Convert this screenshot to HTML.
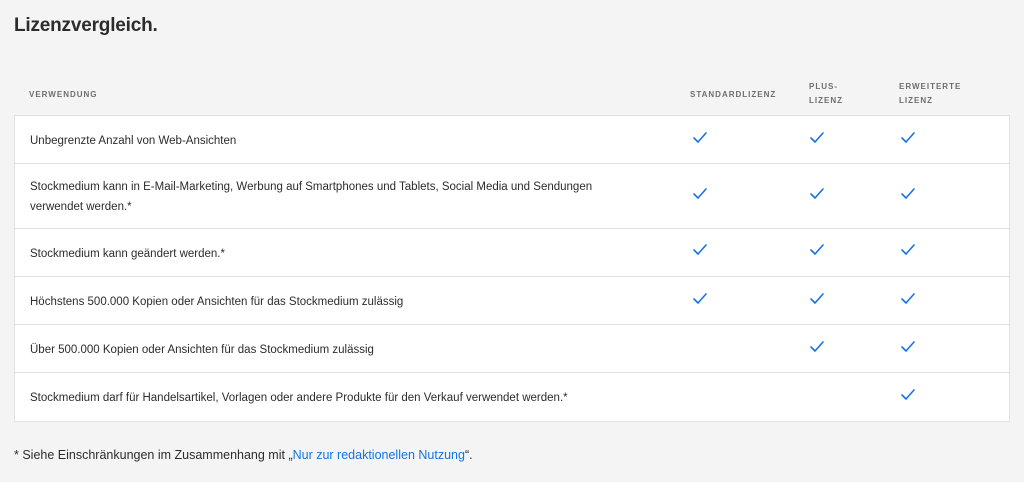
<!DOCTYPE html>
<html><head><meta charset="utf-8"><style>
body{margin:0;width:1024px;height:482px;background:#f4f4f4;font-family:"Liberation Sans",sans-serif;color:#2c2c2c;position:relative;overflow:hidden}
h1{position:absolute;left:14px;top:15px;margin:0;font-size:19px;font-weight:bold;color:#2c2c2c;letter-spacing:-0.2px}
.h{position:absolute;font-size:8px;font-weight:bold;color:#6e6e6e;letter-spacing:1px;line-height:14px}
.tbl{position:absolute;left:14px;top:115px;width:994px;height:305px;background:#fff;border:1px solid #e1e1e1}
.row{position:absolute;left:0;width:994px;border-top:1px solid #e1e1e1}
.t{position:absolute;left:15px;font-size:11.5px;line-height:20px;color:#2c2c2c}
.f{position:absolute;left:14px;top:448px;font-size:12.5px;color:#2c2c2c}
.f a{color:#1473e6;text-decoration:none}
</style></head><body>
<h1>Lizenzvergleich.</h1>
<div class="h" style="left:29px;top:88px">VERWENDUNG</div>
<div class="h" style="left:690px;top:88px">STANDARDLIZENZ</div>
<div class="h" style="left:809px;top:80px">PLUS-<br>LIZENZ</div>
<div class="h" style="left:899px;top:80px">ERWEITERTE<br>LIZENZ</div>
<div class="tbl">
<div class="row" style="top:-1px;height:48px;border-top:none"><div class="t" style="top:16px">Unbegrenzte Anzahl von Web-Ansichten</div></div>
<div class="row" style="top:47px;height:65px"><div class="t" style="top:13px">Stockmedium kann in E-Mail-Marketing, Werbung auf Smartphones und Tablets, Social Media und Sendungen<br>verwendet werden.*</div></div>
<div class="row" style="top:112px;height:48px"><div class="t" style="top:15px">Stockmedium kann geändert werden.*</div></div>
<div class="row" style="top:160px;height:48px"><div class="t" style="top:15px">Höchstens 500.000 Kopien oder Ansichten für das Stockmedium zulässig</div></div>
<div class="row" style="top:208px;height:48px"><div class="t" style="top:15px">Über 500.000 Kopien oder Ansichten für das Stockmedium zulässig</div></div>
<div class="row" style="top:256px;height:48px"><div class="t" style="top:15px">Stockmedium darf für Handelsartikel, Vorlagen oder andere Produkte für den Verkauf verwendet werden.*</div></div>
</div>
<svg width="1024" height="482" style="position:absolute;left:0;top:0" fill="none" stroke="#1473e6" stroke-width="1.6" stroke-linecap="round" stroke-linejoin="round">
<defs><path id="k" d="M0 5 L4 9 L12 0"/></defs>
<use href="#k" x="694" y="133"/><use href="#k" x="811" y="133"/><use href="#k" x="902" y="133"/>
<use href="#k" x="694" y="189"/><use href="#k" x="811" y="189"/><use href="#k" x="902" y="189"/>
<use href="#k" x="694" y="245"/><use href="#k" x="811" y="245"/><use href="#k" x="902" y="245"/>
<use href="#k" x="694" y="294"/><use href="#k" x="811" y="294"/><use href="#k" x="902" y="294"/>
<use href="#k" x="811" y="342"/><use href="#k" x="902" y="342"/>
<use href="#k" x="902" y="390"/>
</svg>
<div class="f">* Siehe Einschränkungen im Zusammenhang mit „<a>Nur zur redaktionellen Nutzung</a>“.</div>
</body></html>
